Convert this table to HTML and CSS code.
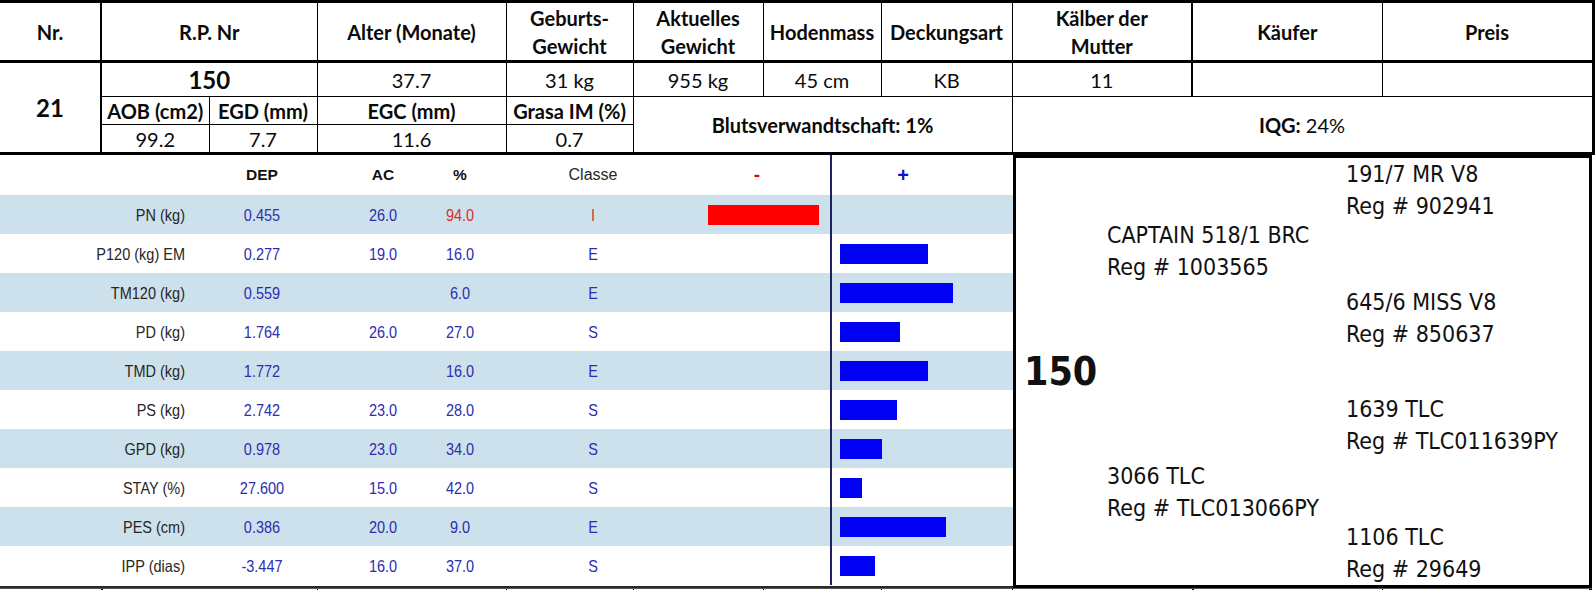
FILE: index.html
```html
<!DOCTYPE html>
<html lang="de">
<head>
<meta charset="utf-8">
<title>Bulle 150</title>
<link rel="stylesheet" href="styles.css">
</head>
<body>
<table class="info">
  <colgroup>
    <col class="w-nr"><col class="w-aob"><col class="w-egd"><col class="w-alter"><col class="w-geb"><col class="w-akt"><col class="w-hod"><col class="w-deck"><col class="w-kalb"><col class="w-kauf"><col class="w-preis">
  </colgroup>
  <tr class="head">
    <th class="nr">Nr.</th>
    <th colspan="2">R.P. Nr</th>
    <th>Alter (Monate)</th>
    <th>Geburts-<br>Gewicht</th>
    <th>Aktuelles<br>Gewicht</th>
    <th>Hodenmass</th>
    <th>Deckungsart</th>
    <th class="kalb">Kälber der<br>Mutter</th>
    <th>Käufer</th>
    <th class="preis">Preis</th>
  </tr>
  <tr class="r1">
    <td rowspan="3" class="nr big">21</td>
    <td colspan="2" class="big">150</td>
    <td>37.7</td>
    <td>31 kg</td>
    <td>955 kg</td>
    <td>45 cm</td>
    <td>KB</td>
    <td class="kalb">11</td>
    <td></td>
    <td class="preis"></td>
  </tr>
  <tr class="r2">
    <th>AOB (cm2)</th>
    <th>EGD (mm)</th>
    <th>EGC (mm)</th>
    <th>Grasa IM (%)</th>
    <td colspan="3" rowspan="2" class="strong">Blutsverwandtschaft: 1%</td>
    <td colspan="3" rowspan="2" class="preis"><b>IQG:</b> 24%</td>
  </tr>
  <tr class="r3">
    <td>99.2</td>
    <td>7.7</td>
    <td>11.6</td>
    <td>0.7</td>
  </tr>
</table>

<div class="lower">
  <div class="chart">
    <div class="crow chead">
      <span></span><span>DEP</span><span>AC</span><span>%</span><span class="classe">Classe</span><span class="neg minus">-</span><span class="pos plus">+</span>
    </div>
    <div class="crow alt">
      <span class="lbl">PN (kg)</span><span class="v">0.455</span><span class="v">26.0</span><span class="v red">94.0</span><span class="v red">I</span><span class="neg"><i class="bar rbar" style="width:111px"></i></span><span class="pos"></span>
    </div>
    <div class="crow">
      <span class="lbl">P120 (kg) EM</span><span class="v">0.277</span><span class="v">19.0</span><span class="v">16.0</span><span class="v">E</span><span class="neg"></span><span class="pos"><i class="bar bbar" style="width:88px"></i></span>
    </div>
    <div class="crow alt">
      <span class="lbl">TM120 (kg)</span><span class="v">0.559</span><span class="v"></span><span class="v">6.0</span><span class="v">E</span><span class="neg"></span><span class="pos"><i class="bar bbar" style="width:113px"></i></span>
    </div>
    <div class="crow">
      <span class="lbl">PD (kg)</span><span class="v">1.764</span><span class="v">26.0</span><span class="v">27.0</span><span class="v">S</span><span class="neg"></span><span class="pos"><i class="bar bbar" style="width:60px"></i></span>
    </div>
    <div class="crow alt">
      <span class="lbl">TMD (kg)</span><span class="v">1.772</span><span class="v"></span><span class="v">16.0</span><span class="v">E</span><span class="neg"></span><span class="pos"><i class="bar bbar" style="width:88px"></i></span>
    </div>
    <div class="crow">
      <span class="lbl">PS (kg)</span><span class="v">2.742</span><span class="v">23.0</span><span class="v">28.0</span><span class="v">S</span><span class="neg"></span><span class="pos"><i class="bar bbar" style="width:57px"></i></span>
    </div>
    <div class="crow alt">
      <span class="lbl">GPD (kg)</span><span class="v">0.978</span><span class="v">23.0</span><span class="v">34.0</span><span class="v">S</span><span class="neg"></span><span class="pos"><i class="bar bbar" style="width:42px"></i></span>
    </div>
    <div class="crow">
      <span class="lbl">STAY (%)</span><span class="v">27.600</span><span class="v">15.0</span><span class="v">42.0</span><span class="v">S</span><span class="neg"></span><span class="pos"><i class="bar bbar" style="width:22px"></i></span>
    </div>
    <div class="crow alt">
      <span class="lbl">PES (cm)</span><span class="v">0.386</span><span class="v">20.0</span><span class="v">9.0</span><span class="v">E</span><span class="neg"></span><span class="pos"><i class="bar bbar" style="width:106px"></i></span>
    </div>
    <div class="crow">
      <span class="lbl">IPP (dias)</span><span class="v">-3.447</span><span class="v">16.0</span><span class="v">37.0</span><span class="v">S</span><span class="neg"></span><span class="pos"><i class="bar bbar" style="width:35px"></i></span>
    </div>
  </div>

  <div class="pedigree">
    <div class="subject">150</div>
    <div class="anc parent p-sire">CAPTAIN 518/1 BRC<br>Reg # 1003565</div>
    <div class="anc parent p-dam">3066 TLC<br>Reg # TLC013066PY</div>
    <div class="anc gp g1">191/7 MR V8<br>Reg # 902941</div>
    <div class="anc gp g2">645/6 MISS V8<br>Reg # 850637</div>
    <div class="anc gp g3">1639 TLC<br>Reg # TLC011639PY</div>
    <div class="anc gp g4">1106 TLC<br>Reg # 29649</div>
  </div>
</div>

<div class="next">
  <span class="nc w1"></span><span class="nc w2"></span><span class="nc w3"></span><span class="nc w4"></span><span class="nc w5"></span><span class="nc w6"></span><span class="nc w7"></span><span class="nc w8"></span><span class="nc w9"></span><span class="nc w10"></span>
</div>
</body>
</html>
```

FILE: styles.css
```css
* { box-sizing: border-box; }

html, body {
  margin: 0;
  padding: 0;
  background: #fff;
}

body {
  width: 1595px;
  height: 590px;
  overflow: hidden;
  font-family: Lato, "Liberation Sans", sans-serif;
  color: #000;
}

/* ---------- top info table ---------- */
.info {
  border-collapse: collapse;
  table-layout: fixed;
  width: 1592px;
}

.w-nr { width: 101px; }
.w-aob { width: 108px; }
.w-egd { width: 108px; }
.w-alter { width: 189px; }
.w-geb { width: 127px; }
.w-akt { width: 130px; }
.w-hod { width: 118px; }
.w-deck { width: 131px; }
.w-kalb { width: 180px; }
.w-kauf { width: 190px; }
.w-preis { width: 211px; }

.info th,
.info td {
  border: 1px solid #000;
  padding: 0;
  text-align: center;
  vertical-align: middle;
  font-size: 20px;
  line-height: 24px;
  white-space: nowrap;
  color: #0a0a0a;
}

.info th { font-weight: 700; }

.info .nr { border-left: none; }
.info .kalb { border-right: 2px solid #000; }
.info .preis { border-right: 3px solid #000; }

.info tr.head th {
  border-top: 3px solid #000;
  border-bottom: 3px solid #000;
  height: 60px;
  line-height: 28px;
}

.info tr.head th.nr { border-right: 2px solid #000; }
.info td.nr { border-right: 2px solid #000; border-bottom: 3px solid #000; }

.info tr.r1 td { height: 35px; }
.info tr.r2 th, .info tr.r2 td { height: 28px; }
.info tr.r3 td { height: 29px; border-bottom: 3px solid #000; }
.info tr.r2 td { border-bottom: 3px solid #000; }

.info .big { font-size: 24px; font-weight: 700; }
.info .strong { font-weight: 700; font-size: 20px; }

/* ---------- lower area ---------- */
.lower {
  display: flex;
  width: 1592px;
  height: 433px;
}

.chart {
  width: 1013px;
  border-bottom: 2px solid #2a2a2a;
  font-family: "Liberation Sans", Arial, sans-serif;
}

.crow {
  display: grid;
  grid-template-columns: 200px 124px 118px 36px 230px 122px 183px;
  height: 39px;
  align-items: stretch;
  background: #fff;
}

.crow.alt { background: #cde1ec; }

.crow > span {
  display: flex;
  align-items: center;
  justify-content: center;
  font-size: 14.5px;
  color: #2d2db0;
  white-space: nowrap;
}

.crow > .v,
.crow > .lbl {
  transform: scaleY(1.15);
}

.crow > .lbl {
  justify-content: flex-end;
  padding-right: 15px;
  color: #262626;
}

.crow > .red { color: #d43030; }

.chead {
  height: 40px;
}

.chead > span {
  font-weight: 700;
  font-size: 15.5px;
  color: #111;
}

.chead > .classe {
  font-weight: 400;
  font-size: 16px;
  color: #262626;
}

.crow > .neg {
  justify-content: flex-end;
  padding-right: 11px;
}

.crow > .pos {
  justify-content: flex-start;
  padding-left: 8px;
  border-left: 2px solid #1d2160;
}

.chead > .minus {
  justify-content: center;
  padding-right: 24px;
  color: #e00000;
  font-size: 19px;
}

.chead > .plus {
  justify-content: center;
  padding-left: 0;
  padding-right: 39px;
  color: #1010d0;
  font-size: 20px;
}

.bar {
  display: block;
  height: 20px;
}

.rbar { background: #ff0000; }
.bbar { background: #0000f2; }

/* ---------- pedigree ---------- */
.pedigree {
  flex: 1;
  border: 3px solid #000;
  display: grid;
  grid-template-columns: 91px 239px 1fr;
  grid-template-rows: repeat(4, 1fr);
  font-family: "DejaVu Sans Condensed", "DejaVu Sans", sans-serif;
  font-stretch: condensed;
  color: #111;
}

.subject {
  grid-column: 1;
  grid-row: 1 / 5;
  align-self: center;
  padding-left: 8px;
  font-size: 39px;
  font-weight: 700;
  line-height: 40px;
}

.anc {
  font-size: 23px;
  line-height: 32px;
  white-space: nowrap;
}

.parent { grid-column: 2; align-self: center; }
.p-sire { grid-row: 1 / 3; margin-bottom: 28px; }
.p-dam { grid-row: 3 / 5; margin-top: 28px; }

.gp { grid-column: 3; }
.g1 { grid-row: 1; align-self: start; }
.g2 { grid-row: 2; align-self: center; }
.g3 { grid-row: 3; align-self: center; }
.g4 { grid-row: 4; align-self: end; }

/* ---------- start of next record ---------- */
.next {
  display: flex;
  width: 1592px;
  height: 12px;
  border-top: 1px solid #555;
}

.nc { display: block; border-left: 1px solid #000; }
.nc.w1 { width: 101px; border-left: none; }
.nc.w2 { width: 216px; border-left: 2px solid #000; }
.nc.w3 { width: 189px; }
.nc.w4 { width: 127px; }
.nc.w5 { width: 130px; }
.nc.w6 { width: 118px; }
.nc.w7 { width: 131px; }
.nc.w8 { width: 180px; }
.nc.w9 { width: 190px; border-left: 2px solid #000; }
.nc.w10 { width: 210px; border-right: 3px solid #000; }
```
